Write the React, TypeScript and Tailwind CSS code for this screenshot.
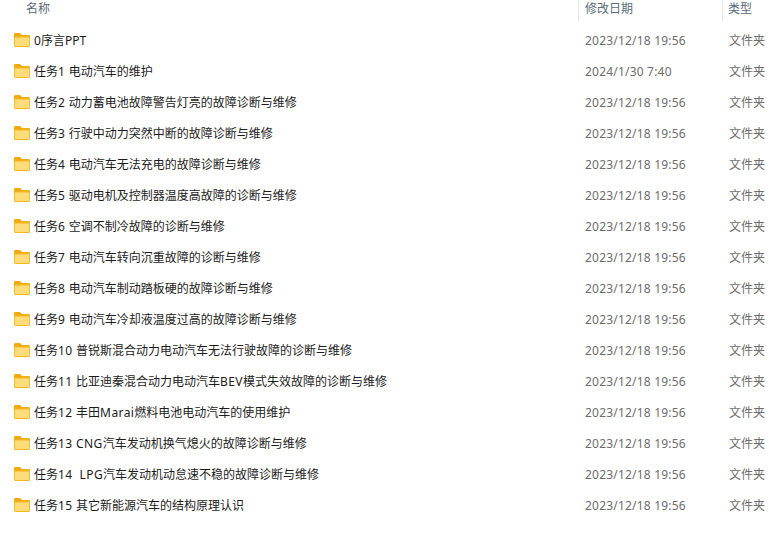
const rows: [string, string][] = [
  ["0序言PPT", "2023/12/18 19:56"],
  ["任务1 电动汽车的维护", "2024/1/30 7:40"],
  ["任务2 动力蓄电池故障警告灯亮的故障诊断与维修", "2023/12/18 19:56"],
  ["任务3 行驶中动力突然中断的故障诊断与维修", "2023/12/18 19:56"],
  ["任务4 电动汽车无法充电的故障诊断与维修", "2023/12/18 19:56"],
  ["任务5 驱动电机及控制器温度高故障的诊断与维修", "2023/12/18 19:56"],
  ["任务6 空调不制冷故障的诊断与维修", "2023/12/18 19:56"],
  ["任务7 电动汽车转向沉重故障的诊断与维修", "2023/12/18 19:56"],
  ["任务8 电动汽车制动踏板硬的故障诊断与维修", "2023/12/18 19:56"],
  ["任务9 电动汽车冷却液温度过高的故障诊断与维修", "2023/12/18 19:56"],
  ["任务10 普锐斯混合动力电动汽车无法行驶故障的诊断与维修", "2023/12/18 19:56"],
  ["任务11 比亚迪秦混合动力电动汽车BEV模式失效故障的诊断与维修", "2023/12/18 19:56"],
  ["任务12 丰田Marai燃料电池电动汽车的使用维护", "2023/12/18 19:56"],
  ["任务13 CNG汽车发动机换气熄火的故障诊断与维修", "2023/12/18 19:56"],
  ["任务14  LPG汽车发动机动怠速不稳的故障诊断与维修", "2023/12/18 19:56"],
  ["任务15 其它新能源汽车的结构原理认识", "2023/12/18 19:56"],
];

function Folder() {
  return (
    <svg width="16" height="14" viewBox="0 0 16 14" className="block shrink-0 mb-[1px]">
      <path d="M0 1.5C0 .7.6 0 1.4 0H6l2 2h6.6c.8 0 1.4.6 1.4 1.4V5H0z" fill="#f0aa0e" />
      <path d="M0 3.5h6.5L8.5 2.5H16V12.6c0 .8-.6 1.4-1.4 1.4H1.4C.6 14 0 13.4 0 12.6z" fill="#f5b51d" />
      <path d="M.8 4.6h14.4v7.6c0 .5-.4.9-.9.9H1.7c-.5 0-.9-.4-.9-.9z" fill="#fddc7c" />
    </svg>
  );
}

function Name({ text }: { text: string }) {
  const parts = text.split(/([\x20-\x7e]+)/).filter(Boolean);
  return (
    <span className="text-[#1c1c1c] whitespace-pre">
      {parts.map((p, i) =>
        /^[\x20-\x7e]+$/.test(p) && text !== rows[0][0] ? (
          <span key={i} className="tracking-[0.4px]">{p}</span>
        ) : (
          <span key={i}>{p}</span>
        )
      )}
    </span>
  );
}

export default function App() {
  return (
    <div className="w-[769px] h-[550px] bg-white overflow-hidden font-['Noto_Sans','Noto_Sans_CJK_SC',sans-serif] text-[12px] leading-[16px]">
      <div className="flex h-[22px] text-[#5b6b7a]">
        <div className="w-[579px] pl-[26px] pt-[1px] border-r border-[#e5e5e5]">名称</div>
        <div className="w-[144px] pl-[6px] pt-[1px] border-r border-[#e5e5e5]">修改日期</div>
        <div className="pl-[5px] pt-[1px]">类型</div>
      </div>
      <div className="pt-[3px]">
        {rows.map(([name, date]) => (
          <div key={name} className="flex items-center h-[31px]">
            <div className="w-[579px] pl-[14px] flex items-center gap-[4px]">
              <Folder />
              <Name text={name} />
            </div>
            <div className="w-[144px] pl-[6px] text-[#6d6d6d] tracking-[0.2px]">{date}</div>
            <div className="pl-[6px] text-[#6d6d6d]">文件夹</div>
          </div>
        ))}
      </div>
    </div>
  );
}
